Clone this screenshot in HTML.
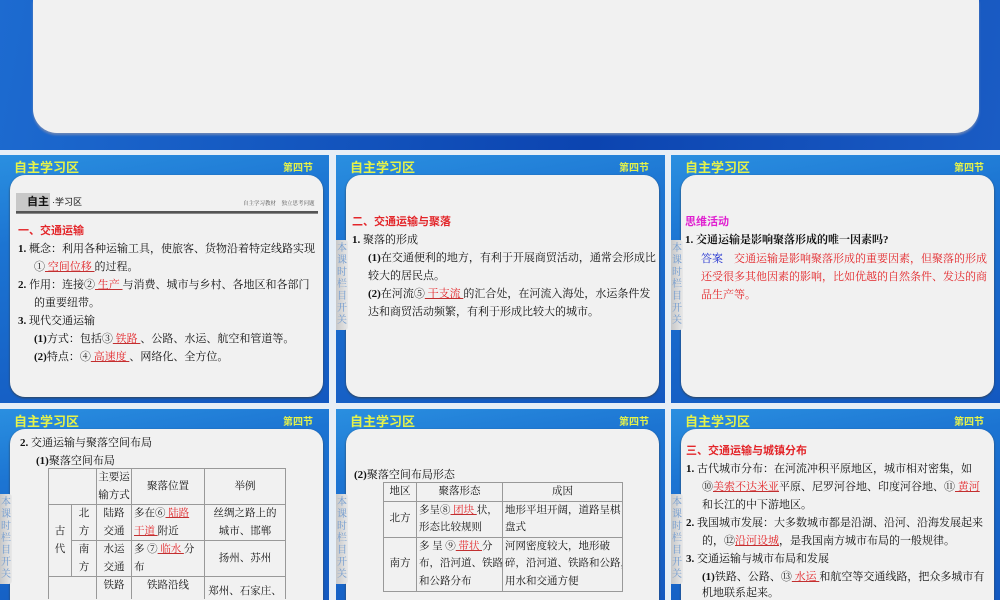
<!DOCTYPE html>
<html><head><meta charset="utf-8"><style>
*{margin:0;padding:0;box-sizing:border-box}
html,body{width:1000px;height:600px;overflow:hidden}
body{background:#e6eef6;position:relative;font-family:"Liberation Serif","Noto Serif CJK SC",serif;color:#111}
.top{position:absolute;left:0;top:0;width:1000px;height:150px;background:linear-gradient(100deg,#1d6bd0,#0c44b0 60%,#1a5cc4)}
.top .p{position:absolute;left:33px;top:0;width:946px;height:133px;background:#f1f1f1;border-radius:0 0 24px 24px;box-shadow:0 2px 2px #6a86b8}
.s{position:absolute;width:329px;height:248px;overflow:hidden;background:linear-gradient(170deg,#2a8fe0 0%,#1c74d2 30%,#1358c0 100%)}
.s2{height:191px}
.s .hd{position:absolute;left:14px;top:2px;font:bold 13px "Liberation Sans","Noto Sans CJK SC",sans-serif;color:#e5f24a}
.s .hr{position:absolute;right:16px;top:4px;font:bold 10px "Liberation Sans","Noto Sans CJK SC",sans-serif;color:#e5f24a}
.s .pn{position:absolute;left:10px;top:20px;width:313px;height:222px;background:#f1f1f1;border-radius:15px;box-shadow:0 1px 2px #345}
.s2 .pn{height:171px;border-radius:15px 15px 0 0}
.s .tab{position:absolute;left:0;top:85px;width:12px;height:90px;background:linear-gradient(90deg,#c8c8c8,#e8e8e8);border-radius:0 3px 3px 0;font-size:10px;line-height:12px;color:#6f9ad0;text-align:center;padding-top:3px}
.t{position:absolute;font-size:11px;line-height:18px;white-space:nowrap}
.r{color:#e3262a}
.b{font-weight:bold}
.u{color:#e3262a;text-decoration:underline;text-decoration-color:#c03030}
table{position:absolute;border-collapse:collapse;table-layout:fixed;font-size:10.5px;line-height:17.5px}
td{border:1px solid #999;text-align:center;padding:0;vertical-align:middle;white-space:nowrap;overflow:hidden}
td.l{text-align:left;padding-left:2px}
.clip{height:22px;overflow:hidden}
</style></head><body>
<div class="top"><div class="p"></div></div>

<div class="s" style="left:0;top:155px">
<div class="hd">自主学习区</div><div class="hr">第四节</div><div class="pn"></div>
<div style="position:absolute;left:16px;top:38px;width:34px;height:18px;background:#c8c8c8"></div>
<div class="t b" style="left:27px;top:38px;font-family:'Liberation Sans','Noto Sans CJK SC',sans-serif">自主 <span style="font-weight:normal;font-size:9px">·学习区</span></div>
<div class="t" style="left:243px;top:40px;font-size:5.5px;color:#555">自主学习教材　独立思考问题</div>
<div style="position:absolute;left:16px;top:56px;width:302px;height:3px;border-top:2px solid #555;border-bottom:1px solid #888"></div>
<div class="t r b" style="left:18px;top:67px;font-family:'Liberation Sans','Noto Sans CJK SC',sans-serif">一、交通运输</div>
<div class="t" style="left:18px;top:85px"><b>1.</b>  概念：利用各种运输工具，使旅客、货物沿着特定线路实现</div>
<div class="t" style="left:34px;top:103px">①<span class="u"> 空间位移 </span>的过程。</div>
<div class="t" style="left:18px;top:121px"><b>2.</b>  作用：连接②<span class="u"> 生产 </span>与消费、城市与乡村、各地区和各部门</div>
<div class="t" style="left:34px;top:139px">的重要纽带。</div>
<div class="t" style="left:18px;top:157px"><b>3.</b>  现代交通运输</div>
<div class="t" style="left:34px;top:175px"><b>(1)</b>方式：包括③<span class="u"> 铁路 </span>、公路、水运、航空和管道等。</div>
<div class="t" style="left:34px;top:193px"><b>(2)</b>特点：④<span class="u"> 高速度 </span>、网络化、全方位。</div>
</div>

<div class="s" style="left:336px;top:155px">
<div class="hd">自主学习区</div><div class="hr">第四节</div><div class="pn"></div>
<div class="tab">本<br>课<br>时<br>栏<br>目<br>开<br>关</div>
<div class="t r b" style="left:16px;top:58px;font-family:'Liberation Sans','Noto Sans CJK SC',sans-serif">二、交通运输与聚落</div>
<div class="t" style="left:16px;top:76px"><b>1.</b>  聚落的形成</div>
<div class="t" style="left:32px;top:94px"><b>(1)</b>在交通便利的地方，有利于开展商贸活动，通常会形成比</div>
<div class="t" style="left:32px;top:112px">较大的居民点。</div>
<div class="t" style="left:32px;top:130px"><b>(2)</b>在河流⑤<span class="u"> 干支流 </span>的汇合处，在河流入海处，水运条件发</div>
<div class="t" style="left:32px;top:148px">达和商贸活动频繁，有利于形成比较大的城市。</div>
</div>

<div class="s" style="left:671px;top:155px">
<div class="hd">自主学习区</div><div class="hr">第四节</div><div class="pn"></div>
<div class="tab">本<br>课<br>时<br>栏<br>目<br>开<br>关</div>
<div class="t b" style="left:14px;top:58px;color:#e020d0;font-family:'Liberation Sans','Noto Sans CJK SC',sans-serif">思维活动</div>
<div class="t b" style="left:14px;top:76px">1.  交通运输是影响聚落形成的唯一因素吗?</div>
<div class="t" style="left:30px;top:95px"><span style="color:#2030d0">答案</span>　<span class="r">交通运输是影响聚落形成的重要因素，但聚落的形成</span></div>
<div class="t r" style="left:30px;top:113px">还受很多其他因素的影响，比如优越的自然条件、发达的商</div>
<div class="t r" style="left:30px;top:131px">品生产等。</div>
</div>

<div class="s s2" style="left:0;top:409px">
<div class="hd">自主学习区</div><div class="hr">第四节</div><div class="pn"></div>
<div class="tab">本<br>课<br>时<br>栏<br>目<br>开<br>关</div>
<div class="t" style="left:20px;top:25px"><b>2.</b>  交通运输与聚落空间布局</div>
<div class="t" style="left:36px;top:43px"><b>(1)</b>聚落空间布局</div>
<table style="left:48px;top:59px;width:237px">
<colgroup><col style="width:23px"><col style="width:25px"><col style="width:35px"><col style="width:73px"><col style="width:81px"></colgroup>
<tr style="height:36px"><td colspan="2"></td><td>主要运<br>输方式</td><td>聚落位置</td><td>举例</td></tr>
<tr style="height:36px"><td rowspan="2">古<br>代</td><td>北<br>方</td><td>陆路<br>交通</td><td class="l">多在⑥<span class="u"> 陆路<br>干道 </span>附近</td><td>丝绸之路上的<br>城市、邯郸</td></tr>
<tr style="height:36px"><td>南<br>方</td><td>水运<br>交通</td><td class="l">多 ⑦<span class="u"> 临水 </span>分<br>布</td><td>扬州、苏州</td></tr>
<tr style="height:22px"><td colspan="2" style="border-bottom:none"></td><td style="vertical-align:top;border-bottom:none"><div class="clip">铁路</div></td><td style="vertical-align:top;border-bottom:none"><div class="clip">铁路沿线</div></td><td style="vertical-align:bottom;border-bottom:none"><div class="clip" style="line-height:30px">郑州、石家庄、</div></td></tr>
</table>
</div>

<div class="s s2" style="left:336px;top:409px">
<div class="hd">自主学习区</div><div class="hr">第四节</div><div class="pn"></div>
<div class="tab">本<br>课<br>时<br>栏<br>目<br>开<br>关</div>
<div class="t" style="left:18px;top:57px"><b>(2)</b>聚落空间布局形态</div>
<table style="left:47px;top:73px;width:239px">
<colgroup><col style="width:33px"><col style="width:86px"><col style="width:120px"></colgroup>
<tr style="height:18px"><td>地区</td><td>聚落形态</td><td>成因</td></tr>
<tr style="height:36px"><td>北方</td><td class="l">多呈⑧<span class="u"> 团块 </span>状，<br>形态比较规则</td><td class="l">地形平坦开阔，道路呈棋<br>盘式</td></tr>
<tr style="height:54px"><td>南方</td><td class="l">多 呈 ⑨<span class="u"> 带状 </span>分<br>布，沿河道、铁路<br>和公路分布</td><td class="l">河网密度较大，地形破<br>碎，沿河道、铁路和公路，<br>用水和交通方便</td></tr>
</table>
</div>

<div class="s s2" style="left:671px;top:409px">
<div class="hd">自主学习区</div><div class="hr">第四节</div><div class="pn"></div>
<div class="tab">本<br>课<br>时<br>栏<br>目<br>开<br>关</div>
<div class="t r b" style="left:15px;top:33px;font-family:'Liberation Sans','Noto Sans CJK SC',sans-serif">三、交通运输与城镇分布</div>
<div class="t" style="left:15px;top:51px"><b>1.</b>  古代城市分布：在河流冲积平原地区，城市相对密集，如</div>
<div class="t" style="left:31px;top:69px">⑩<span class="u">美索不达米亚</span>平原、尼罗河谷地、印度河谷地、⑪<span class="u"> 黄河 </span></div>
<div class="t" style="left:31px;top:87px">和长江的中下游地区。</div>
<div class="t" style="left:15px;top:105px"><b>2.</b>  我国城市发展：大多数城市都是沿湖、沿河、沿海发展起来</div>
<div class="t" style="left:31px;top:123px">的，⑫<span class="u">沿河设城</span>，是我国南方城市布局的一般规律。</div>
<div class="t" style="left:15px;top:141px"><b>3.</b>  交通运输与城市布局和发展</div>
<div class="t" style="left:31px;top:159px"><b>(1)</b>铁路、公路、⑬<span class="u"> 水运 </span>和航空等交通线路，把众多城市有</div>
<div class="t" style="left:31px;top:177px;line-height:14px">机地联系起来。</div>
</div>
</body></html>
